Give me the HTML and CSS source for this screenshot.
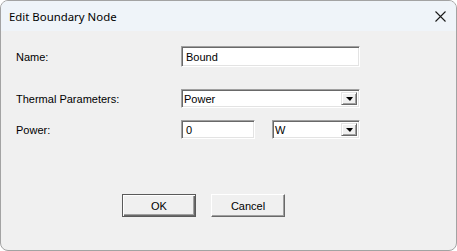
FILE: index.html
```html
<!DOCTYPE html>
<html>
<head>
<meta charset="utf-8">
<link rel="stylesheet" href="styles.css">
</head>
<body>
<div class="window">
  <div class="titlebar">
    <span class="title">Edit Boundary Node</span>
    <svg class="close" width="11" height="11" viewBox="0 0 11 11"><path d="M0.5 0.5 L10.5 10.5 M10.5 0.5 L0.5 10.5" stroke="#1a1a1a" stroke-width="1.1" fill="none"/></svg>
  </div>
  <div class="content">
    <div class="row row-name">
      <label class="label">Name:</label>
      <div class="edit edit-wide">Bound</div>
    </div>
    <div class="row row-thermal">
      <label class="label">Thermal Parameters:</label>
      <div class="combo combo-wide"><span class="combo-text">Power</span><span class="drop"><span class="arrow"></span></span></div>
    </div>
    <div class="row row-power">
      <label class="label">Power:</label>
      <div class="pair">
        <div class="edit edit-small">0</div>
        <div class="combo combo-unit"><span class="combo-text">W</span><span class="drop"><span class="arrow"></span></span></div>
      </div>
    </div>
    <div class="buttons">
      <div class="btn btn-default">OK</div>
      <div class="btn">Cancel</div>
    </div>
  </div>
</div>
</body>
</html>
```
FILE: styles.css
```css
html, body { margin: 0; padding: 0; background: #ffffff; }
.window {
  width: 457px; height: 251px; box-sizing: border-box;
  border: 1px solid #a3a3a3; border-radius: 8px; overflow: hidden;
  background: #f0f0f0; display: flex; flex-direction: column;
}
.titlebar {
  height: 30px; background: #eff4f9; display: flex; align-items: center;
  justify-content: space-between; padding: 0 10px 0 8px; flex: none;
}
.title { font-family: "Noto Sans", "Open Sans", sans-serif; font-size: 11.4px; color: #000; }
.close { display: block; }
.content {
  padding: 15px 0 0 15px;
  font-family: "Liberation Sans", Arial, sans-serif; font-size: 11px; color: #000;
}
.row { display: grid; grid-template-columns: 165px auto; align-items: center; }
.label { display: block; }
.row-thermal { margin-top: 22px; }
.row-power { margin-top: 12px; }
.edit {
  box-sizing: border-box; background: #fff;
  border-top: 1px solid #a0a0a0; border-left: 1px solid #a0a0a0;
  border-bottom: 1px solid #fff; border-right: 1px solid #fff;
  box-shadow: inset 1px 1px 0 #696969, inset -1px -1px 0 #e3e3e3;
  padding-left: 4px; display: flex; align-items: center;
}
.edit-wide { width: 179px; height: 21px; }
.edit-small { width: 74px; height: 19px; }
.pair { display: flex; gap: 17px; }
.combo {
  box-sizing: border-box; background: #fff; height: 19px;
  border-top: 1px solid #a0a0a0; border-left: 1px solid #a0a0a0;
  border-bottom: 1px solid #fff; border-right: 1px solid #fff;
  box-shadow: inset 1px 1px 0 #696969, inset -1px -1px 0 #e3e3e3;
  display: flex; align-items: stretch; padding: 2px 2px 2px 2px;
}
.combo-wide { width: 179px; }
.combo-unit { width: 88px; }
.combo-text { flex: 1; display: flex; align-items: center; padding-left: 0; }
.drop {
  width: 16px; box-sizing: border-box; background: #f0f0f0;
  border-top: 1px solid #e3e3e3; border-left: 1px solid #e3e3e3;
  border-bottom: 1px solid #696969; border-right: 1px solid #696969;
  box-shadow: inset 1px 1px 0 #fff, inset -1px -1px 0 #a0a0a0;
  display: flex; align-items: center; justify-content: center;
}
.arrow {
  width: 0; height: 0; border-left: 4px solid transparent; border-right: 3px solid transparent;
  border-top: 4px solid #000; margin-top: 1px;
}
.buttons { display: flex; gap: 15px; margin-top: 55px; padding-left: 106px; }
.btn {
  box-sizing: border-box; width: 74px; height: 23px; background: #f0f0f0;
  border-top: 1px solid #fff; border-left: 1px solid #fff;
  border-bottom: 1px solid #696969; border-right: 1px solid #696969;
  box-shadow: inset -1px -1px 0 #a0a0a0;
  display: flex; align-items: center; justify-content: center;
}
.btn-default {
  border: 1px solid #5a5a5a;
  box-shadow: inset 1px 1px 0 #fff, inset -1px -1px 0 #696969, inset -2px -2px 0 #a0a0a0;
}
```
